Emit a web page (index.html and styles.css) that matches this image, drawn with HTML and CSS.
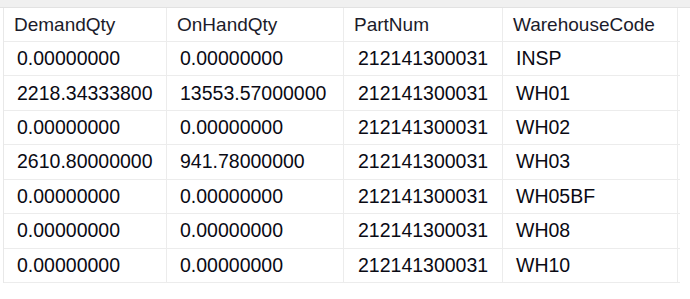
FILE: index.html
```html
<!DOCTYPE html>
<html>
<head>
<meta charset="utf-8">
<link rel="stylesheet" href="styles.css">
</head>
<body>
<div class="band"></div>
<div class="grid">
  <div class="row head">
    <div class="cell c1">DemandQty</div>
    <div class="cell c2">OnHandQty</div>
    <div class="cell c3">PartNum</div>
    <div class="cell c4">WarehouseCode</div>
  </div>
  <div class="row">
    <div class="cell c1">0.00000000</div>
    <div class="cell c2">0.00000000</div>
    <div class="cell c3">212141300031</div>
    <div class="cell c4">INSP</div>
  </div>
  <div class="row">
    <div class="cell c1">2218.34333800</div>
    <div class="cell c2">13553.57000000</div>
    <div class="cell c3">212141300031</div>
    <div class="cell c4">WH01</div>
  </div>
  <div class="row">
    <div class="cell c1">0.00000000</div>
    <div class="cell c2">0.00000000</div>
    <div class="cell c3">212141300031</div>
    <div class="cell c4">WH02</div>
  </div>
  <div class="row">
    <div class="cell c1">2610.80000000</div>
    <div class="cell c2">941.78000000</div>
    <div class="cell c3">212141300031</div>
    <div class="cell c4">WH03</div>
  </div>
  <div class="row">
    <div class="cell c1">0.00000000</div>
    <div class="cell c2">0.00000000</div>
    <div class="cell c3">212141300031</div>
    <div class="cell c4">WH05BF</div>
  </div>
  <div class="row">
    <div class="cell c1">0.00000000</div>
    <div class="cell c2">0.00000000</div>
    <div class="cell c3">212141300031</div>
    <div class="cell c4">WH08</div>
  </div>
  <div class="row">
    <div class="cell c1">0.00000000</div>
    <div class="cell c2">0.00000000</div>
    <div class="cell c3">212141300031</div>
    <div class="cell c4">WH10</div>
  </div>
</div>
</body>
</html>
```
FILE: styles.css
```css
html, body {
  margin: 0;
  padding: 0;
  background: #ffffff;
}
body {
  font-family: "Liberation Sans", Arial, sans-serif;
  font-size: 19.5px;
  color: #000;
  width: 690px;
  height: 299px;
  overflow: hidden;
}
.band {
  height: 7px;
  background: #f0f0f0;
  border-bottom: 1px solid #e2e2e2;
}
.grid {
  margin-left: 3px;
  width: 676px;
  border-left: 1px solid #e8e8e8;
}
.row {
  display: grid;
  grid-template-columns: 163px 177px 159px 175px;
  height: 34.43px;
  box-sizing: border-box;
  border-bottom: 1px solid #ececec;
  color: #0a0a14;
}
.row.head {
  height: 34px;
  font-size: 19px;
  color: #1b1b2a;
}
.cell {
  display: flex;
  align-items: center;
  border-right: 1px solid #ececec;
  padding-left: 13px;
  white-space: nowrap;
  overflow: hidden;
}
.head .cell {
  padding-left: 10px;
}
.row .c3 {
  padding-left: 14px;
}
.head .c3 {
  padding-left: 10px;
}
```
